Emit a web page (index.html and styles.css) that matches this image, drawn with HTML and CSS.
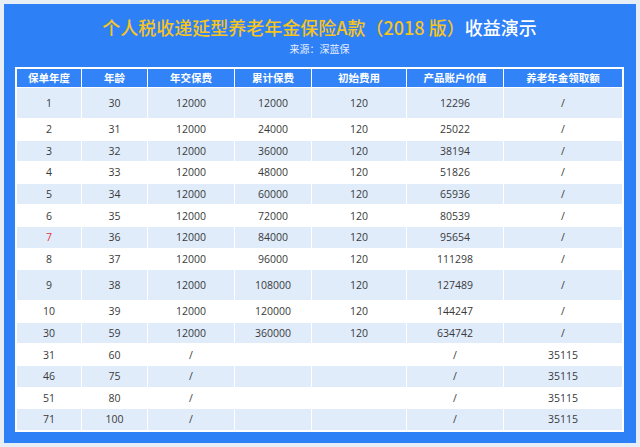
FILE: index.html
```html
<!DOCTYPE html>
<html lang="zh">
<head>
<meta charset="utf-8">
<link rel="stylesheet" href="styles.css">
</head>
<body>
<div class="frame">
  <h1 class="title"><span class="yellow">个人税收递延型养老年金保险A款（2018 版）</span>收益演示</h1>
  <div class="source">来源：深蓝保</div>
  <table class="grid">
    <colgroup>
      <col class="c1"><col class="c2"><col class="c3"><col class="c4"><col class="c5"><col class="c6"><col class="c7">
    </colgroup>
    <thead>
      <tr><th>保单年度</th><th>年龄</th><th>年交保费</th><th>累计保费</th><th>初始费用</th><th>产品账户价值</th><th>养老年金领取额</th></tr>
    </thead>
    <tbody>
      <tr class="alt tall"><td>1</td><td>30</td><td>12000</td><td>12000</td><td>120</td><td>12296</td><td>/</td></tr>
      <tr><td>2</td><td>31</td><td>12000</td><td>24000</td><td>120</td><td>25022</td><td>/</td></tr>
      <tr class="alt"><td>3</td><td>32</td><td>12000</td><td>36000</td><td>120</td><td>38194</td><td>/</td></tr>
      <tr><td>4</td><td>33</td><td>12000</td><td>48000</td><td>120</td><td>51826</td><td>/</td></tr>
      <tr class="alt"><td>5</td><td>34</td><td>12000</td><td>60000</td><td>120</td><td>65936</td><td>/</td></tr>
      <tr><td>6</td><td>35</td><td>12000</td><td>72000</td><td>120</td><td>80539</td><td>/</td></tr>
      <tr class="alt"><td class="red">7</td><td>36</td><td>12000</td><td>84000</td><td>120</td><td>95654</td><td>/</td></tr>
      <tr><td>8</td><td>37</td><td>12000</td><td>96000</td><td>120</td><td>111298</td><td>/</td></tr>
      <tr class="alt tall"><td>9</td><td>38</td><td>12000</td><td>108000</td><td>120</td><td>127489</td><td>/</td></tr>
      <tr><td>10</td><td>39</td><td>12000</td><td>120000</td><td>120</td><td>144247</td><td>/</td></tr>
      <tr class="alt"><td>30</td><td>59</td><td>12000</td><td>360000</td><td>120</td><td>634742</td><td>/</td></tr>
      <tr><td>31</td><td>60</td><td>/</td><td></td><td></td><td>/</td><td>35115</td></tr>
      <tr class="alt"><td>46</td><td>75</td><td>/</td><td></td><td></td><td>/</td><td>35115</td></tr>
      <tr><td>51</td><td>80</td><td>/</td><td></td><td></td><td>/</td><td>35115</td></tr>
      <tr class="alt"><td>71</td><td>100</td><td>/</td><td></td><td></td><td>/</td><td>35115</td></tr>
    </tbody>
  </table>
</div>
</body>
</html>
```
FILE: styles.css
```css
html, body {
  margin: 0;
  padding: 0;
}
body {
  background: #e8eef6;
  width: 640px;
  height: 447px;
  overflow: hidden;
  font-family: "Open Sans", "Noto Sans CJK SC", sans-serif;
}
.frame {
  margin: 4px;
  height: 439px;
  width: 632px;
  box-sizing: border-box;
  background: #2e80f7;
  padding: 11px 12px 0 11px;
}
.title {
  margin: 0;
  font-family: "Noto Sans CJK SC", sans-serif;
  font-weight: 500;
  font-size: 18px;
  line-height: 24px;
  height: 24px;
  text-align: center;
  color: #ffffff;
}
.yellow {
  color: #f6c41e;
}
.source {
  margin-top: 3px;
  font-family: "Noto Sans CJK SC", sans-serif;
  font-size: 10px;
  line-height: 14px;
  text-align: center;
  color: #e6eeff;
}
.grid {
  margin-top: 11px;
  width: 609px;
  table-layout: fixed;
  border-collapse: separate;
  border-spacing: 1px;
  border: 1px solid #ffffff;
  background: #ffffff;
}
.c1 { width: 64px; }
.c2 { width: 65px; }
.c3 { width: 86px; }
.c4 { width: 76px; }
.c5 { width: 94px; }
.c6 { width: 96px; }
.c7 { width: 118px; }
.grid th {
  background: #3183f7;
  color: #ffffff;
  font-family: "Noto Sans CJK SC", sans-serif;
  font-weight: 700;
  font-size: 10.5px;
  height: 18px;
  padding: 0;
  line-height: 18px;
}
.grid td {
  padding: 0;
  height: 20.6px;
  text-align: center;
  font-size: 10.5px;
  color: #3a3a3a;
  background: #ffffff;
}
.grid tr.alt td {
  background: #e1ecfb;
}
.grid tr.tall td {
  height: 30px;
}
.grid td.red {
  color: #e8343a;
}
```
